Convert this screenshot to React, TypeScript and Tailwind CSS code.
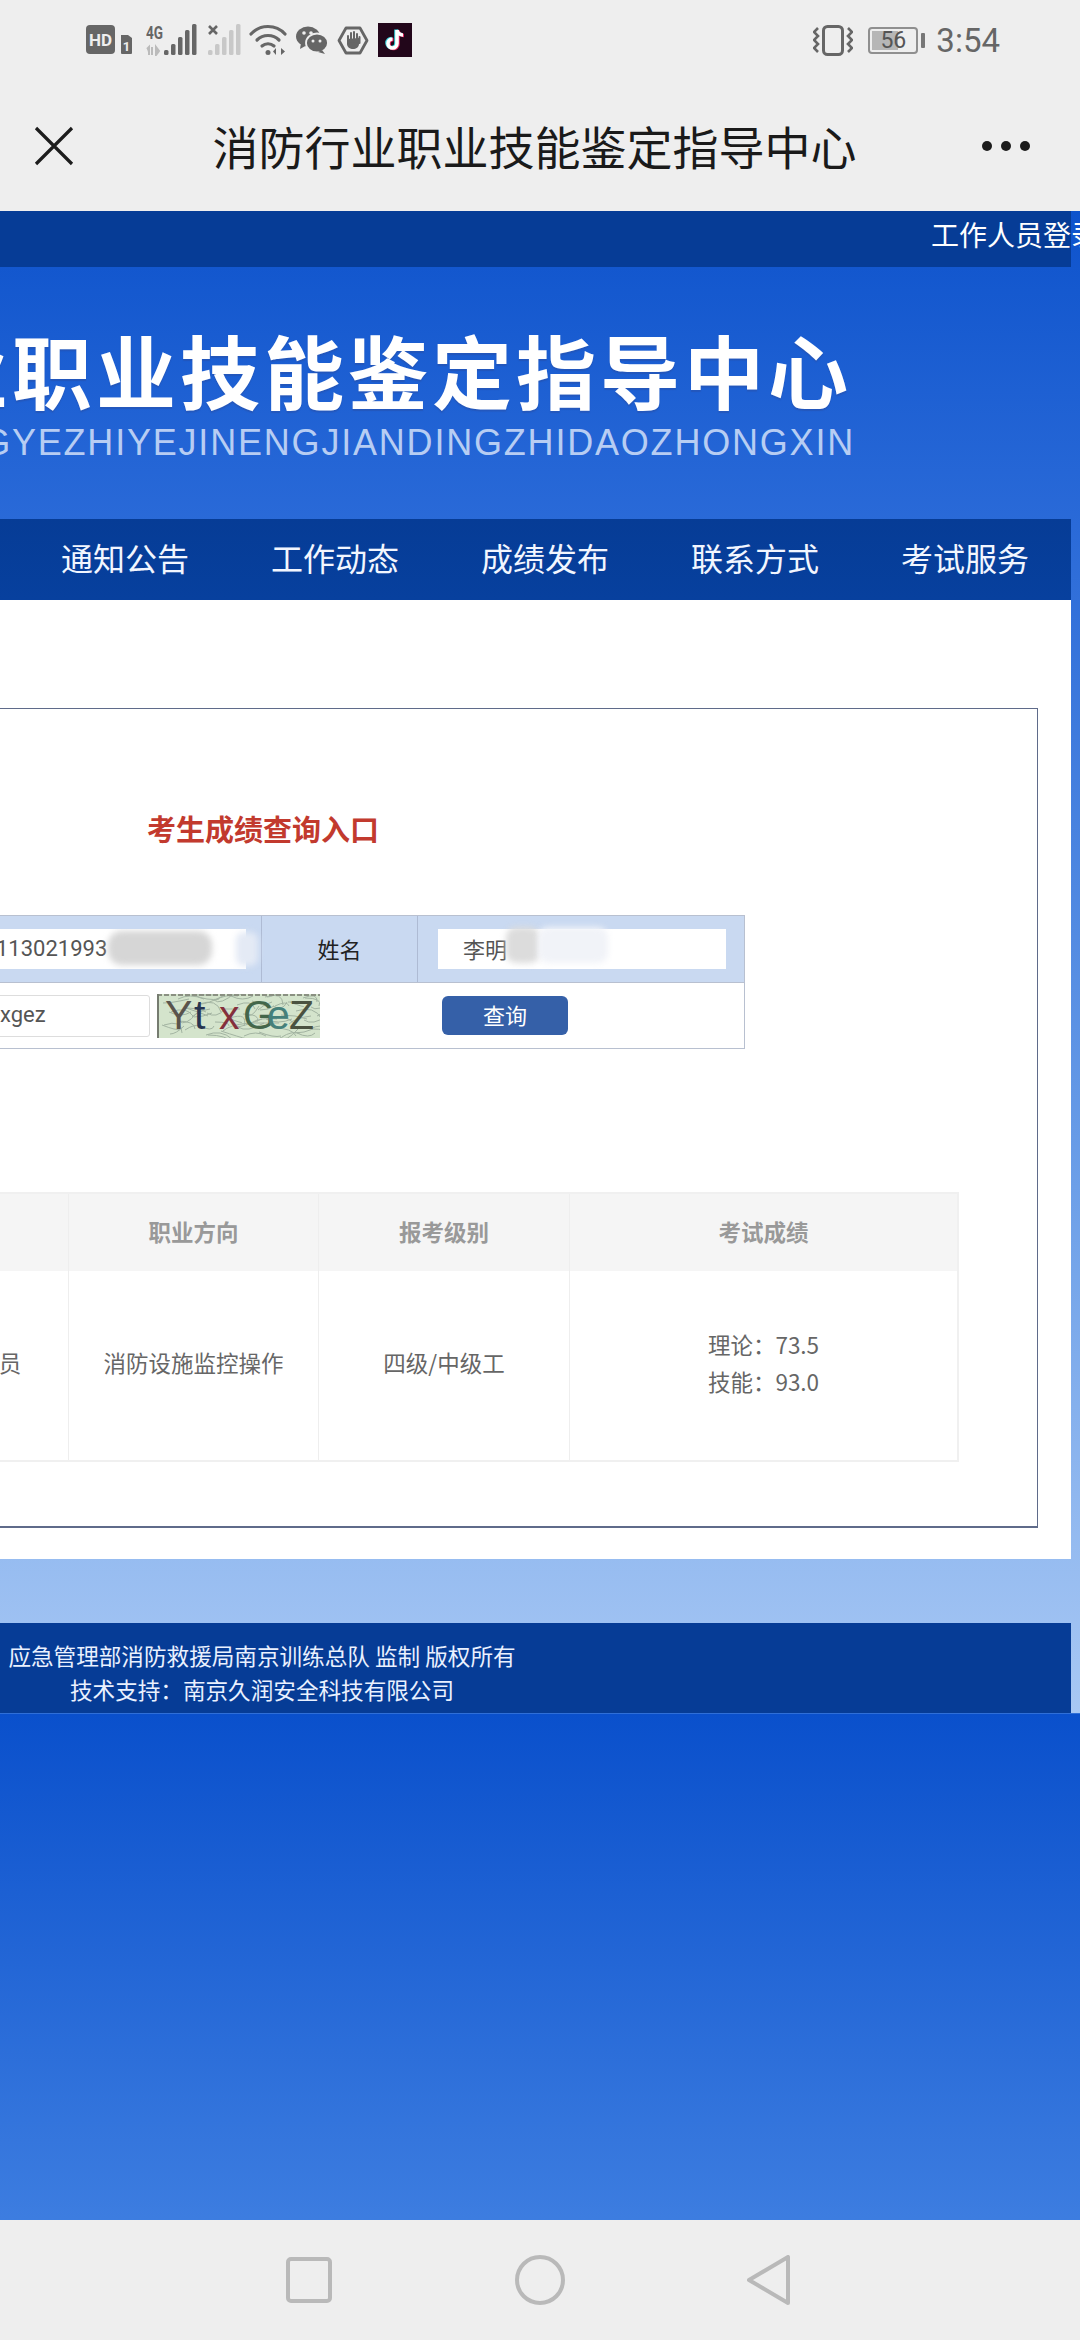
const cjk = "font-['Noto_Sans_CJK_SC','Liberation_Sans',sans-serif]";

function Hd() {
  return (
    <svg width="50" height="30" viewBox="0 0 50 30">
      <rect x="0" y="0" width="29" height="29" rx="4" fill="#666" />
      <text x="14.500" y="21" textAnchor="middle" fontSize="17" fontWeight="700" fontFamily="Roboto" fill="#eee">HD</text>
      <path d="M35 10h7l4 3v15a1 1 0 0 1-1 1H36a1 1 0 0 1-1-1z" fill="#666" />
      <text x="40.500" y="26" textAnchor="middle" fontSize="13" fontWeight="700" fontFamily="Roboto" fill="#eee">1</text>
    </svg>
  );
}

function Signal4G() {
  const bars = [[18, 26, 5], [25, 20, 11], [32, 13, 18], [39, 6, 25], [46, 0, 31]];
  return (
    <svg width="51" height="32" viewBox="0 0 51 32">
      <text x="0" y="15" fontSize="18" fontWeight="700" fontFamily="Roboto" fill="#666" textLength="17" lengthAdjust="spacingAndGlyphs">4G</text>
      <path d="M3 31v-8l-2 2M6 23v8M10 23v8l3-4z" stroke="#bbb" strokeWidth="2" fill="#bbb" />
      {bars.map(([x, y, h]) => <rect key={x} x={x} y={y} width="4.500" height={h} rx="1.500" fill="#666" />)}
    </svg>
  );
}

function SignalX() {
  const bars = [[0, 26, 5], [7, 20, 11], [14, 13, 18], [21, 6, 25], [28, 0, 31]];
  return (
    <svg width="33" height="32" viewBox="0 0 33 32">
      {bars.map(([x, y, h]) => <rect key={x} x={x} y={y} width="4.500" height={h} rx="1.500" fill="#c8c8c8" />)}
      <path d="M1 2l8 8M9 2l-8 8" stroke="#666" strokeWidth="2.600" />
    </svg>
  );
}

function Wifi() {
  return (
    <svg width="38" height="32" viewBox="0 0 38 32" fill="none" stroke="#666" strokeWidth="3.200" strokeLinecap="round">
      <path d="M2 10C11 0 27 0 36 10" />
      <path d="M8 16c6-6 16-6 22 0" />
      <path d="M13 22c3.500-3 8.500-3 12 0" />
      <circle cx="19" cy="28.500" r="2.500" fill="#666" stroke="none" />
      <path d="M27 31v-7l-3 3.500zM32 24v7l4-3.500z" fill="#666" stroke="none" />
    </svg>
  );
}

function WeChat() {
  return (
    <svg width="32" height="28" viewBox="0 0 32 28">
      <ellipse cx="12" cy="10.500" rx="12" ry="10" fill="#666" />
      <path d="M5 17l-1 6 7-4z" fill="#666" />
      <ellipse cx="21" cy="17" rx="11" ry="9.500" fill="#666" stroke="#eee" strokeWidth="1.800" />
      <path d="M26 24l3 4-7-2z" fill="#666" />
      <circle cx="8" cy="7" r="1.800" fill="#eee" />
      <circle cx="15" cy="7" r="1.800" fill="#eee" />
      <circle cx="17" cy="15" r="1.500" fill="#eee" />
      <circle cx="24" cy="15" r="1.500" fill="#eee" />
    </svg>
  );
}

function HandStop() {
  return (
    <svg width="32" height="29" viewBox="0 0 32 29">
      <path d="M9 2h14l7 12.500L23 27H9L2 14.500z" fill="none" stroke="#666" strokeWidth="2.800" strokeLinejoin="round" />
      <path d="M10 13v5c0 3 3 5 6 5s6-2 6-5v-6z" fill="#666" />
      <g stroke="#666" strokeWidth="2" strokeLinecap="round">
        <path d="M11 17V10M14 16V7M17 16V6M20 16V8M22.500 17v-6" />
      </g>
    </svg>
  );
}

function TikTok() {
  const note = "M19 7v13.500a4.500 4.500 0 1 1-4.500-4.500M19 7c.5 3 3 5 6 5";
  return (
    <svg width="34" height="34" viewBox="0 0 34 34" fill="none" strokeWidth="3.600">
      <rect width="34" height="34" fill="#22061a" />
      <path d={note} stroke="#39d5df" transform="translate(-1 -.5)" />
      <path d={note} stroke="#e0245e" transform="translate(1 .5)" />
      <path d={note} stroke="#fff" />
    </svg>
  );
}

function Vibrate() {
  const s = "M5 0L1 4l4 4-4 4 4 4-4 4 4 4";
  return (
    <svg width="40" height="31" viewBox="0 0 40 31" fill="none" stroke="#666">
      <rect x="10.500" y="1.500" width="19" height="28" rx="4" strokeWidth="3" />
      <path d={s} transform="translate(0 3)" strokeWidth="2.600" />
      <path d={s} transform="translate(40 3) scale(-1 1)" strokeWidth="2.600" />
    </svg>
  );
}

function Battery() {
  return (
    <div className="flex items-center gap-[3px]">
      <div className="relative h-[27px] w-[50px] overflow-hidden rounded-[4px] border-2 border-[#8f8f8f] p-[2px]">
        <div className="h-full w-[26px] bg-[#b6b6b6]" />
        <span className="absolute inset-0 flex items-center justify-center font-['Roboto',sans-serif] text-[23px] leading-none text-[#555]">56</span>
      </div>
      <div className="h-[15px] w-[4px] rounded-[1px] bg-[#777]" />
    </div>
  );
}

function Captcha() {
  const noise: string[] = [];
  for (let i = 0; i < 70; i++) {
    const x = (i * 37) % 163;
    const y = (i * 23) % 44;
    noise.push(`M${x} ${y}q${6 + (i % 5) * 3} ${(i % 3) * 6 - 6} ${14 + (i % 4) * 4} ${(i % 5) * 4 - 8}`);
  }
  const letters: [string, number, string][] = [
    ["Y", 8, "#5a544c"],
    ["t", 37, "#26344f"],
    ["x", 62, "#84303c"],
    ["G", 86, "#43664a"],
    ["e", 110, "#45807a"],
    ["Z", 132, "#4a5240"],
  ];
  return (
    <svg width="163" height="44" viewBox="0 0 163 44" className="ml-[7px] shrink-0">
      <rect width="163" height="44" fill="#d4e4cc" />
      <g fill="none" stroke="#a3b4a2" strokeWidth="1">
        {noise.map((d) => <path key={d} d={d} />)}
      </g>
      <path d="M0 1h163" stroke="#8a9082" strokeWidth="2" strokeDasharray="5 2" />
      <path d="M1 0v44" stroke="#767c70" strokeWidth="2" />
      {letters.map(([c, x, col]) => (
        <text key={c} x={x} y="35" fontSize="41" fontFamily="Liberation Sans" fill={col}>{c}</text>
      ))}
    </svg>
  );
}

export default function App() {
  const nav = ["通知公告", "工作动态", "成绩发布", "联系方式", "考试服务"];
  const th = "flex items-center justify-center border-r border-[#eeeeee] pb-[2px] text-[22.5px] font-bold text-[#999999]";
  const td = "flex items-center justify-center border-r border-[#eeeeee] pb-[6px] text-[22.5px] text-[#666666]";
  return (
    <div className={`${cjk} flex h-[2340px] w-[1080px] flex-col overflow-hidden bg-[#eeeeee]`}>
      <header className="h-[211px] shrink-0 bg-[#eeeeee]">
        <div className="flex h-[80px] items-center justify-between pl-[86px] pr-[80px]">
          <div className="flex items-center">
            <Hd />
            <div className="ml-[10px]"><Signal4G /></div>
            <div className="ml-[11px]"><SignalX /></div>
            <div className="ml-[8px]"><Wifi /></div>
            <div className="ml-[9px]"><WeChat /></div>
            <div className="ml-[9px]"><HandStop /></div>
            <div className="ml-[9px]"><TikTok /></div>
          </div>
          <div className="flex items-center">
            <Vibrate />
            <div className="ml-[15px]"><Battery /></div>
            <span className="ml-[11px] font-['Roboto',sans-serif] text-[33px] leading-none text-[#666666]">3:54</span>
          </div>
        </div>
        <div className="flex h-[131px] items-start justify-between pl-[34px] pr-[50px] pt-[46px]">
          <svg width="40" height="40" viewBox="0 0 40 40" fill="none" stroke="#1c1c1c" strokeWidth="3.200">
            <path d="M2 2l36 36M38 2L2 38" />
          </svg>
          <h1 className="ml-[13px] mt-[-9px] text-[46px] leading-[56px] text-[#1a1a1a]">消防行业职业技能鉴定指导中心</h1>
          <div className="mt-[15px] flex gap-[9px]">
            <span className="h-[10px] w-[10px] rounded-full bg-[#1c1c1c]" />
            <span className="h-[10px] w-[10px] rounded-full bg-[#1c1c1c]" />
            <span className="h-[10px] w-[10px] rounded-full bg-[#1c1c1c]" />
          </div>
        </div>
      </header>

      <section className="h-[1502px] shrink-0 bg-[linear-gradient(180deg,#0e53cc_0%,#2a6ad8_21%,#6c9fe8_65%,#a8c8f4_100%)]">
        <div className="w-[1071px]">
          <div className="flex h-[56px] items-start whitespace-nowrap bg-[#063c96] pl-[931px] pt-[8px] text-[28px] leading-[30px] text-white">工作人员登录</div>

          <div className="flex h-[252px] flex-col items-end whitespace-nowrap pr-[219px] pt-[54px]">
            <div className="text-[80px] font-bold leading-[94px] tracking-[4px] text-white [text-shadow:0_2px_1px_rgba(40,80,170,0.55)]">消防行业职业技能鉴定指导中心</div>
            <div className="mr-[-3px] mt-[8px] font-['Liberation_Sans',sans-serif] text-[36px] leading-[40px] tracking-[1.8px] text-[#b7cdf3]">XIAOFANGHANGYEZHIYEJINENGJIANDINGZHIDAOZHONGXIN</div>
          </div>

          <nav className="flex h-[81px] items-start justify-end bg-[linear-gradient(180deg,#063c96,#07409e)] pr-[1px] pt-[19px]">
            {nav.map((n) => (
              <a key={n} className="w-[210px] shrink-0 text-center text-[32px] leading-[38px] text-[#f2f6ff]">{n}</a>
            ))}
          </nav>

          <main className="flex h-[959px] flex-col items-end bg-white pr-[33px] pt-[108px]">
            <div className="flex h-[820px] w-[1300px] shrink-0 flex-col items-end border border-b-2 border-[#5f6b8a] pt-[97px]">
              <h2 className="pr-[658px] text-[29px] font-bold leading-[44px] text-[#c23a2e]">考生成绩查询入口</h2>

              <div className="mr-[292px] mt-[65px] w-[800px] border border-[#b8c0d0]">
                <div className="grid h-[66px] grid-cols-[316px_156px_326px] bg-[#c9d9f1]">
                  <div className="relative flex items-center justify-end border-r border-[#aebbd4] pr-[15px]">
                    <div className="relative flex h-[40px] w-[285px] items-center overflow-hidden bg-white pb-[2px] pl-[35px] font-['Roboto',sans-serif] text-[22px] text-[#555555]">
                      113021993
                      <div className="absolute left-[147px] top-[2px] h-[34px] w-[104px] rounded-[14px] bg-[#d6d6d6] blur-[3px]" />
                    </div>
                    <div className="absolute left-[290px] top-[16px] h-[34px] w-[22px] rounded-[8px] bg-[#e4eaf5] blur-[3px]" />
                  </div>
                  <div className="flex items-center justify-center border-r border-[#aebbd4] pb-[2px] text-[22px] text-[#222222]">姓名</div>
                  <div className="flex items-center pl-[20px]">
                    <div className="relative flex h-[40px] w-[288px] items-center bg-white pb-[2px] pl-[25px] text-[22px] text-[#555555]">
                      李明
                      <div className="absolute left-[68px] top-[-2px] h-[36px] w-[34px] rounded-[10px] bg-[#dcdcdc] blur-[3px]" />
                      <div className="absolute left-[100px] top-[-2px] h-[36px] w-[70px] rounded-[10px] bg-[#f1f3f8] blur-[3px]" />
                    </div>
                  </div>
                </div>
                <div className="flex h-[66px] items-center border-t border-[#b8c0d0] bg-white">
                  <div className="flex h-[42px] w-[204px] shrink-0 items-center rounded-r-[3px] border border-[#dddddd] bg-white pb-[2px] pl-[53px] font-['Roboto',sans-serif] text-[22px] text-[#555555]">xgez</div>
                  <Captcha />
                  <button className="ml-[122px] h-[39px] w-[126px] shrink-0 rounded-[6px] bg-[#3560a8] pb-[3px] text-[22px] leading-none text-white">查询</button>
                </div>
              </div>

              <div className="mr-[78px] mt-[143px] border-y-2 border-r-2 border-[#f0f0f0] bg-white">
                <div className="grid h-[77px] grid-cols-[252px_250px_251px_387px] bg-[#f5f5f5]">
                  <div className={th}>报考职业</div>
                  <div className={th}>职业方向</div>
                  <div className={th}>报考级别</div>
                  <div className={`${th} border-r-0`}>考试成绩</div>
                </div>
                <div className="grid h-[189px] grid-cols-[252px_250px_251px_387px]">
                  <div className={td}>消防设施操作员</div>
                  <div className={td}>消防设施监控操作</div>
                  <div className={td}>四级/中级工</div>
                  <div className={`${td} flex-col border-r-0 leading-[37px]`}>
                    <div>理论：73.5</div>
                    <div>技能：93.0</div>
                  </div>
                </div>
              </div>
            </div>
          </main>

          <div className="h-[64px]" />

          <footer className="flex h-[90px] w-full flex-col justify-start bg-[#063c96] pt-[16px]">
            <div className="w-[524px] whitespace-nowrap text-center text-[22.600px] leading-[34px] text-[#eaf1ff]">
              <div>应急管理部消防救援局南京训练总队 监制 版权所有</div>
              <div>技术支持：南京久润安全科技有限公司</div>
            </div>
          </footer>
        </div>
      </section>

      <section className="h-[507px] shrink-0 border-t border-[#2f6fd8] bg-[linear-gradient(180deg,#0a50cc,#3d7de0)]" />

      <div className="flex h-[120px] shrink-0 items-center bg-[#eeeeee] pl-[286px]">
        <svg width="46" height="46" viewBox="0 0 46 46" fill="none" stroke="#b9b9b9" strokeWidth="4">
          <rect x="2" y="2" width="42" height="42" rx="3" />
        </svg>
        <svg width="50" height="50" viewBox="0 0 50 50" fill="none" stroke="#b9b9b9" strokeWidth="4" className="ml-[183px]">
          <circle cx="25" cy="25" r="23" />
        </svg>
        <svg width="44" height="50" viewBox="0 0 44 50" fill="none" stroke="#b9b9b9" strokeWidth="4" strokeLinejoin="round" className="ml-[182px]">
          <path d="M41 2v46L2 25z" />
        </svg>
      </div>
    </div>
  );
}
